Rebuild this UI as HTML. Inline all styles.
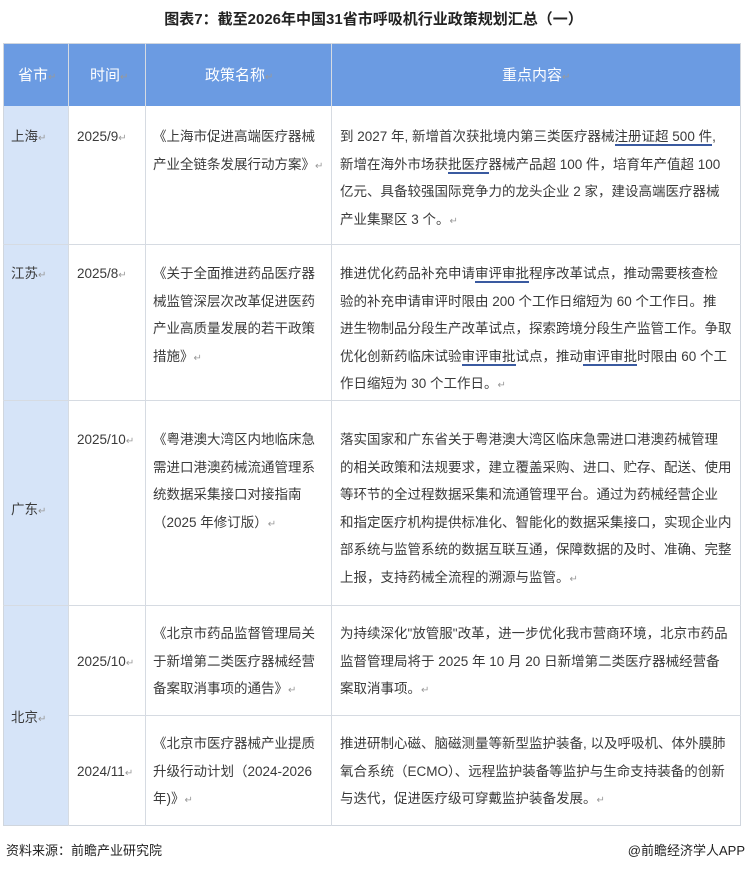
<!DOCTYPE html><html><head><meta charset="utf-8"><style>
body{margin:0;width:747px;height:870px;background:#fff;position:relative;overflow:hidden;font-family:"Liberation Sans","Noto Sans CJK SC",sans-serif;color:#3a3a3a}
.a{position:absolute}
.t{font-size:13.5px;line-height:27.6px;white-space:nowrap}
.h{color:#fff;font-size:15px;top:64px}
.u{border-bottom:2px solid #3a5aa0}
.r{color:#999;font-size:10px}
</style></head><body>
<div class="a" style="left:0;top:8px;width:747px;text-align:center;font-weight:bold;font-size:15px;color:#222">图表7：截至2026年中国31省市呼吸机行业政策规划汇总（一）</div>
<div class="a" style="left:3px;top:43px;width:738px;height:63px;background:#6b9be2"></div>
<div class="a" style="left:3px;top:106px;width:65px;height:720px;background:#d6e4f8"></div>
<div class="a" style="left:3px;top:43px;width:738px;height:783px;border:1px solid #d0d6de;box-sizing:border-box"></div>
<div class="a" style="left:68px;top:43px;width:1px;height:783px;background:#d6dbe2"></div>
<div class="a" style="left:145px;top:43px;width:1px;height:783px;background:#d6dbe2"></div>
<div class="a" style="left:331px;top:43px;width:1px;height:783px;background:#d6dbe2"></div>
<div class="a" style="left:3px;top:244px;width:738px;height:1px;background:#d6dbe2"></div>
<div class="a" style="left:3px;top:400px;width:738px;height:1px;background:#d6dbe2"></div>
<div class="a" style="left:3px;top:605px;width:738px;height:1px;background:#d6dbe2"></div>
<div class="a" style="left:68px;top:715px;width:673px;height:1px;background:#d6dbe2"></div>
<div class="a h" style="left:18px">省市<span class="r">↵</span></div>
<div class="a h" style="left:90px">时间<span class="r">↵</span></div>
<div class="a h" style="left:205px">政策名称<span class="r">↵</span></div>
<div class="a h" style="left:502px">重点内容<span class="r">↵</span></div>

<div class="a t" style="left:11px;top:123px">上海<span class="r">↵</span></div>
<div class="a t" style="left:77px;top:123px">2025/9<span class="r">↵</span></div>
<div class="a t" style="left:153px;top:123px">《上海市促进高端医疗器械<br>产业全链条发展行动方案》<span class="r">↵</span></div>
<div class="a t" style="left:340px;top:123px">到 2027 年, 新增首次获批境内第三类医疗器械<span class="u">注册证超 500 件</span>,<br>新增在海外市场获<span class="u">批医疗</span>器械产品超 100 件，培育年产值超 100<br>亿元、具备较强国际竞争力的龙头企业 2 家，建设高端医疗器械<br>产业集聚区 3 个。<span class="r">↵</span></div>

<div class="a t" style="left:11px;top:260px">江苏<span class="r">↵</span></div>
<div class="a t" style="left:77px;top:260px">2025/8<span class="r">↵</span></div>
<div class="a t" style="left:153px;top:260px">《关于全面推进药品医疗器<br>械监管深层次改革促进医药<br>产业高质量发展的若干政策<br>措施》<span class="r">↵</span></div>
<div class="a t" style="left:340px;top:260px">推进优化药品补充申请<span class="u">审评审批</span>程序改革试点，推动需要核查检<br>验的补充申请审评时限由 200 个工作日缩短为 60 个工作日。推<br>进生物制品分段生产改革试点，探索跨境分段生产监管工作。争取<br>优化创新药临床试验<span class="u">审评审批</span>试点，推动<span class="u">审评审批</span>时限由 60 个工<br>作日缩短为 30 个工作日。<span class="r">↵</span></div>

<div class="a t" style="left:11px;top:496px">广东<span class="r">↵</span></div>
<div class="a t" style="left:77px;top:426px">2025/10<span class="r">↵</span></div>
<div class="a t" style="left:153px;top:426px">《粤港澳大湾区内地临床急<br>需进口港澳药械流通管理系<br>统数据采集接口对接指南<br>（2025 年修订版）<span class="r">↵</span></div>
<div class="a t" style="left:340px;top:426px">落实国家和广东省关于粤港澳大湾区临床急需进口港澳药械管理<br>的相关政策和法规要求，建立覆盖采购、进口、贮存、配送、使用<br>等环节的全过程数据采集和流通管理平台。通过为药械经营企业<br>和指定医疗机构提供标准化、智能化的数据采集接口，实现企业内<br>部系统与监管系统的数据互联互通，保障数据的及时、准确、完整<br>上报，支持药械全流程的溯源与监管。<span class="r">↵</span></div>

<div class="a t" style="left:11px;top:704px">北京<span class="r">↵</span></div>
<div class="a t" style="left:77px;top:648px">2025/10<span class="r">↵</span></div>
<div class="a t" style="left:153px;top:620px">《北京市药品监督管理局关<br>于新增第二类医疗器械经营<br>备案取消事项的通告》<span class="r">↵</span></div>
<div class="a t" style="left:340px;top:620px">为持续深化"放管服"改革，进一步优化我市营商环境，北京市药品<br>监督管理局将于 2025 年 10 月 20 日新增第二类医疗器械经营备<br>案取消事项。<span class="r">↵</span></div>
<div class="a t" style="left:77px;top:758px">2024/11<span class="r">↵</span></div>
<div class="a t" style="left:153px;top:730px">《北京市医疗器械产业提质<br>升级行动计划（2024-2026<br>年)》<span class="r">↵</span></div>
<div class="a t" style="left:340px;top:730px">推进研制心磁、脑磁测量等新型监护装备, 以及呼吸机、体外膜肺<br>氧合系统（ECMO）、远程监护装备等监护与生命支持装备的创新<br>与迭代，促进医疗级可穿戴监护装备发展。<span class="r">↵</span></div>

<div class="a" style="left:6px;top:840px;font-size:13px;color:#222">资料来源：前瞻产业研究院</div>
<div class="a" style="right:2px;top:840px;font-size:13px;color:#222">@前瞻经济学人APP</div>
</body></html>
